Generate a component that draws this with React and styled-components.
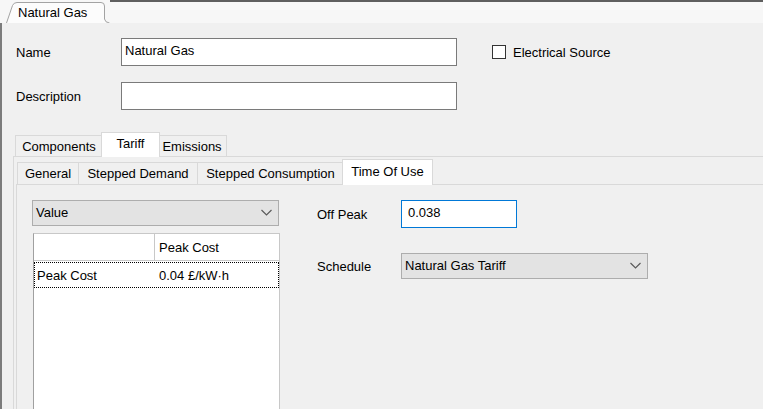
import React from "react";
import styled, { createGlobalStyle } from "styled-components";

const GlobalStyle = createGlobalStyle`
  html, body {
    margin: 0;
    padding: 0;
    background: #f0f0f0;
  }
  body {
    font-family: "Liberation Sans", Arial, sans-serif;
    font-size: 13px;
    color: #000;
  }
  * {
    box-sizing: border-box;
  }
`;

const Window = styled.div`
  width: 763px;
  height: 409px;
  overflow: hidden;
  background: #f0f0f0;
  display: flex;
  flex-direction: column;
`;

const DocStrip = styled.div`
  height: 23px;
  flex: none;
  display: flex;
  background: #f7f7f7;
`;

const DocTab = styled.div`
  position: relative;
  width: 106px;
  margin-left: 4px;
  padding-left: 14px;
  padding-top: 5px;
  height: 23px;
  line-height: 15px;

  svg {
    position: absolute;
    left: 0;
    top: 0;
  }
  span {
    position: relative;
  }
`;

const StripFill = styled.div`
  flex: 1;
  border-top: 2px solid #5f5f5f;
`;

const Panel = styled.div`
  flex: 1;
  min-height: 0;
  border-left: 2px solid #7c7c7c;
  display: flex;
  flex-direction: column;
  padding-top: 15px;
`;

const FormRow = styled.div`
  display: flex;
  align-items: center;
  height: 28px;
  padding-left: 14px;
  margin-top: ${(p) => p.$gap || 0}px;
`;

const FieldLabel = styled.div`
  width: ${(p) => p.$w}px;
  flex: none;
`;

const TextBox = styled.div`
  width: ${(p) => p.$w}px;
  height: 28px;
  flex: none;
  background: #fff;
  border: 1px solid ${(p) => (p.$focus ? "#0078d7" : "#7a7a7a")};
  padding: 0 0 3px ${(p) => p.$pad || 3}px;
  display: flex;
  align-items: center;
`;

const CheckWrap = styled.label`
  display: flex;
  align-items: center;
  gap: 7px;
  margin-left: 35px;
`;

const CheckBox = styled.span`
  width: 14px;
  height: 14px;
  border: 1px solid #333;
  background: #fff;
`;

const TabControl = styled.div`
  flex: 1;
  min-height: 0;
  display: flex;
  flex-direction: column;
  margin-left: ${(p) => p.$left}px;
  margin-top: ${(p) => p.$top}px;
`;

const TabRow = styled.div`
  height: ${(p) => p.$h}px;
  flex: none;
  display: flex;
  align-items: flex-end;
  padding-left: ${(p) => p.$pad}px;
`;

const Tab = styled.div`
  position: relative;
  width: ${(p) => p.$w + (p.$active ? 4 : 0)}px;
  height: ${(p) => (p.$active ? p.$h + 3 : p.$h)}px;
  margin: 0 ${(p) => (p.$active ? -2 : 0)}px -1px;
  z-index: ${(p) => (p.$active ? 2 : 1)};
  background: ${(p) => (p.$active ? "#fff" : "#f0f0f0")};
  border: 1px solid #d9d9d9;
  border-bottom: ${(p) => (p.$active ? "none" : "1px solid #d9d9d9")};
  margin-left: ${(p) => (p.$active ? -2 : -1)}px;
  display: flex;
  justify-content: center;
  align-items: center;
  padding-bottom: ${(p) => (p.$active ? 3 : 0)}px;
  white-space: nowrap;
  &:first-child {
    margin-left: 0;
  }
`;

const TabPage = styled.div`
  flex: 1;
  min-height: 0;
  border: 1px solid #d9d9d9;
  border-right: none;
  border-bottom: none;
  display: flex;
  flex-direction: column;
  padding: ${(p) => p.$pad || "0"};
`;

const PageBody = styled.div`
  flex: 1;
  min-height: 0;
  display: flex;
  padding: 15px 0 0 15px;
`;

const LeftCol = styled.div`
  width: 248px;
  flex: none;
  display: flex;
  flex-direction: column;
`;

const Combo = styled.div`
  width: ${(p) => p.$w}px;
  height: 26px;
  flex: none;
  background: #e3e3e3;
  border: 1px solid #adadad;
  display: flex;
  align-items: center;
  justify-content: space-between;
  padding: 0 6px 2px 3px;
`;

const Chevron = () => (
  <svg width="11" height="7" viewBox="0 0 11 7">
    <polyline points="0.5,1 5.5,6 10.5,1" fill="none" stroke="#5a5a5a" strokeWidth="1.2" />
  </svg>
);

const Grid = styled.div`
  flex: 1;
  margin: 7px 0 0 1px;
  width: 247px;
  background: #fff;
  border-left: 1px solid #a0a0a0;
  border-top: 1px solid #c8c8c8;
  border-right: 1px solid #c8c8c8;
`;

const GridRow = styled.div`
  display: grid;
  grid-template-columns: 121px 1fr;
  height: ${(p) => p.$h}px;
  border: ${(p) => (p.$focus ? "1px dotted #000" : "none")};
  border-bottom: ${(p) => (p.$focus ? "1px dotted #000" : "1px solid #c8c8c8")};
  margin-top: ${(p) => (p.$focus ? 1 : 0)}px;
`;

const Cell = styled.div`
  display: flex;
  align-items: center;
  padding-left: ${(p) => p.$pad}px;
  border-right: ${(p) => (p.$line ? "1px solid #c8c8c8" : "none")};
`;

const RightCol = styled.div`
  margin-left: 37px;
  display: flex;
  flex-direction: column;
`;

const FieldRow = styled.div`
  display: flex;
  align-items: center;
  margin-top: ${(p) => p.$gap || 0}px;
`;

export default function App() {
  return (
    <Window>
      <GlobalStyle />
      <DocStrip>
        <DocTab>
          <svg width="106" height="23" viewBox="0 0 106 23">
            <path
              d="M2.5 23 L8.5 5.5 Q9.7 2.5 13 2.5 L97 2.5 Q100.5 2.5 100.5 6 L100.5 19 Q101 22.5 105.5 23"
              fill="#fcfcfc"
              stroke="#a3a3a3"
            />
          </svg>
          <span>Natural Gas</span>
        </DocTab>
        <StripFill />
      </DocStrip>

      <Panel>
        <FormRow>
          <FieldLabel $w={105}>Name</FieldLabel>
          <TextBox $w={336}>Natural Gas</TextBox>
          <CheckWrap>
            <CheckBox />
            Electrical Source
          </CheckWrap>
        </FormRow>
        <FormRow $gap={16}>
          <FieldLabel $w={105}>Description</FieldLabel>
          <TextBox $w={336} />
        </FormRow>

        <TabControl $left={11} $top={20}>
          <TabRow $h={26} $pad={2}>
            <Tab $w={88} $h={22}>Components</Tab>
            <Tab $w={55} $h={22} $active>Tariff</Tab>
            <Tab $w={70} $h={22}>Emissions</Tab>
          </TabRow>
          <TabPage $pad="2px 0 0 2px">
            <TabControl $left={0} $top={0}>
              <TabRow $h={25} $pad={1}>
                <Tab $w={62} $h={23}>General</Tab>
                <Tab $w={120} $h={23}>Stepped Demand</Tab>
                <Tab $w={147} $h={23}>Stepped Consumption</Tab>
                <Tab $w={87} $h={23} $active>Time Of Use</Tab>
              </TabRow>
              <TabPage>
                <PageBody>
                  <LeftCol>
                    <Combo $w={247}>
                      Value
                      <Chevron />
                    </Combo>
                    <Grid>
                      <GridRow $h={27}>
                        <Cell $pad={3} $line />
                        <Cell $pad={4}>Peak Cost</Cell>
                      </GridRow>
                      <GridRow $h={26} $focus>
                        <Cell $pad={2}>Peak Cost</Cell>
                        <Cell $pad={3}>0.04 £/kW·h</Cell>
                      </GridRow>
                    </Grid>
                  </LeftCol>
                  <RightCol>
                    <FieldRow>
                      <FieldLabel $w={84}>Off Peak</FieldLabel>
                      <TextBox $w={116} $focus $pad={6}>0.038</TextBox>
                    </FieldRow>
                    <FieldRow $gap={25}>
                      <FieldLabel $w={84}>Schedule</FieldLabel>
                      <Combo $w={247}>
                        Natural Gas Tariff
                        <Chevron />
                      </Combo>
                    </FieldRow>
                  </RightCol>
                </PageBody>
              </TabPage>
            </TabControl>
          </TabPage>
        </TabControl>
      </Panel>
    </Window>
  );
}
